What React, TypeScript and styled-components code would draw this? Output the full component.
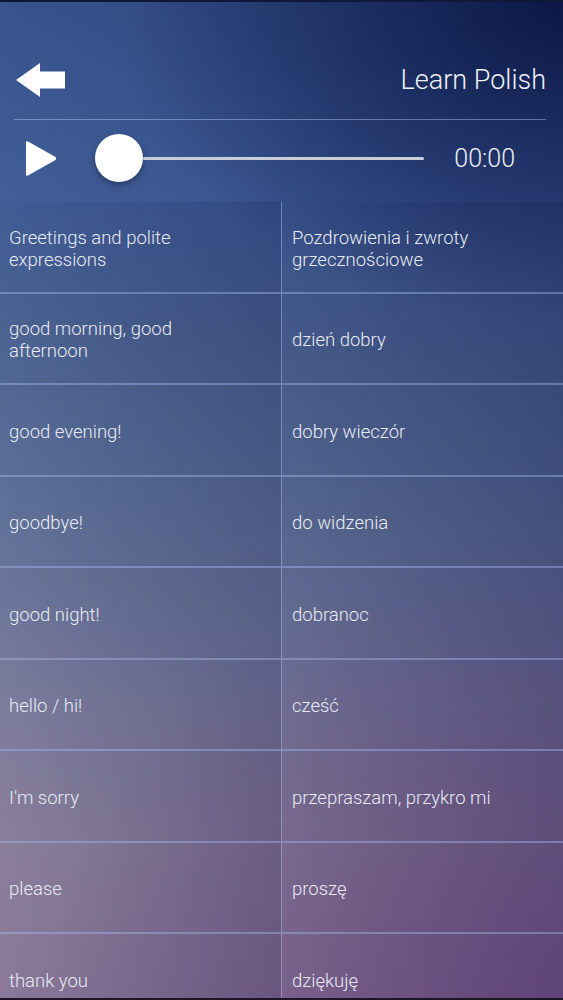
import React from 'react';
import styled, { createGlobalStyle } from 'styled-components';

const phrases: [string, string][] = [
  ['Greetings and polite expressions', 'Pozdrowienia i zwroty grzecznościowe'],
  ['good morning, good afternoon', 'dzień dobry'],
  ['good evening!', 'dobry wieczór'],
  ['goodbye!', 'do widzenia'],
  ['good night!', 'dobranoc'],
  ['hello / hi!', 'cześć'],
  ["I'm sorry", 'przepraszam, przykro mi'],
  ['please', 'proszę'],
  ['thank you', 'dziękuję'],
];

const GlobalStyle = createGlobalStyle`
  html, body {
    margin: 0;
    padding: 0;
    background: #101838;
  }
  body {
    font-family: Roboto, "Liberation Sans", sans-serif;
    -webkit-font-smoothing: antialiased;
  }
`;

const Screen = styled.div`
  width: 563px;
  height: 1000px;
  overflow: hidden;
  box-sizing: border-box;
  border-top: 2px solid #0f1838;
  border-bottom: 2px solid #1c1626;
  background-image:
    radial-gradient(ellipse 80% 32% at 100% 0%, rgba(4, 14, 58, 0.8), rgba(4, 14, 58, 0) 100%),
    radial-gradient(ellipse 90% 45% at 100% 100%, rgba(110, 50, 120, 0.42), rgba(110, 50, 120, 0) 100%),
    linear-gradient(to right, rgba(255, 255, 255, 0.04) 0%, rgba(20, 25, 80, 0.22) 100%),
    linear-gradient(to bottom, #2f4c86 0%, #3a5894 20%, #465f90 32%, #5a6e96 50%, #7a7a9c 70%, #8a7e9a 85%, #8a7698 100%);
`;

const Header = styled.header`
  height: 200px;
  box-sizing: border-box;
  padding: 61px 17px 0 14px;
  display: flex;
  flex-direction: column;
`;

const TopBar = styled.div`
  display: flex;
  align-items: center;
  justify-content: space-between;
  height: 34px;
`;

const BackButton = styled.button`
  border: none;
  background: none;
  padding: 0 0 0 2px;
  display: flex;
  cursor: pointer;
`;

const Title = styled.h1`
  margin: 0;
  font-size: 27px;
  font-weight: 300;
  color: #eef1f8;
`;

const Divider = styled.div`
  height: 1px;
  margin-top: 22px;
  background: rgba(190, 205, 240, 0.45);
`;

const Player = styled.div`
  display: flex;
  align-items: center;
  height: 48px;
  margin-top: 14px;
  padding-left: 10px;
  padding-right: 31px;
`;

const PlayButton = styled.button`
  border: none;
  background: none;
  padding: 0;
  display: flex;
  cursor: pointer;
`;

const Slider = styled.div`
  flex: 1;
  display: flex;
  align-items: center;
  margin-left: 38px;
  margin-right: 30px;
`;

const Thumb = styled.div`
  width: 48px;
  height: 48px;
  border-radius: 50%;
  background: #fff;
  box-shadow: 0 3px 6px rgba(0, 0, 20, 0.35);
  flex-shrink: 0;
`;

const Track = styled.div`
  flex: 1;
  height: 3px;
  border-radius: 2px;
  background: #c9cdd8;
`;

const Time = styled.span`
  font-size: 25px;
  font-weight: 300;
  color: #eef1f8;
`;

const List = styled.div`
  display: grid;
  grid-template-columns: 282px 1fr;
  grid-auto-rows: 91.5px;
`;

const Cell = styled.div<{ $left?: boolean }>`
  box-sizing: border-box;
  display: flex;
  align-items: center;
  padding: ${(p) => (p.$left ? '4px 70px 0 9px' : '4px 60px 0 10px')};
  border-bottom: 2px solid rgba(165, 188, 245, 0.42);
  border-right: ${(p) => (p.$left ? '1px solid rgba(180, 200, 250, 0.45)' : 'none')};
  background: linear-gradient(to right, rgba(10, 20, 60, 0.03), rgba(10, 15, 60, 0.16));
  font-size: 18.5px;
  font-weight: 300;
  line-height: 22px;
  color: #e8ebf3;
`;

const ArrowIcon = () => (
  <svg width="49" height="34" viewBox="0 0 49 34">
    <path d="M0 17 L24 0 V8.5 H49 V25.5 H24 V34 Z" fill="#fff" />
  </svg>
);

const PlayIcon = () => (
  <svg width="33" height="37" viewBox="0 0 33 37">
    <path d="M2 2.5 Q2 0.5 4 1.5 L31.5 17 Q33 18.5 31.5 20 L4 35.5 Q2 36.5 2 34.5 Z" fill="#fff" />
  </svg>
);

export default function App() {
  return (
    <Screen>
      <GlobalStyle />
      <Header>
        <TopBar>
          <BackButton aria-label="back">
            <ArrowIcon />
          </BackButton>
          <Title>Learn Polish</Title>
        </TopBar>
        <Divider />
        <Player>
          <PlayButton aria-label="play">
            <PlayIcon />
          </PlayButton>
          <Slider>
            <Thumb />
            <Track />
          </Slider>
          <Time>00:00</Time>
        </Player>
      </Header>
      <List>
        {phrases.map(([en, pl]) => (
          <React.Fragment key={en}>
            <Cell $left>{en}</Cell>
            <Cell>{pl}</Cell>
          </React.Fragment>
        ))}
      </List>
    </Screen>
  );
}
